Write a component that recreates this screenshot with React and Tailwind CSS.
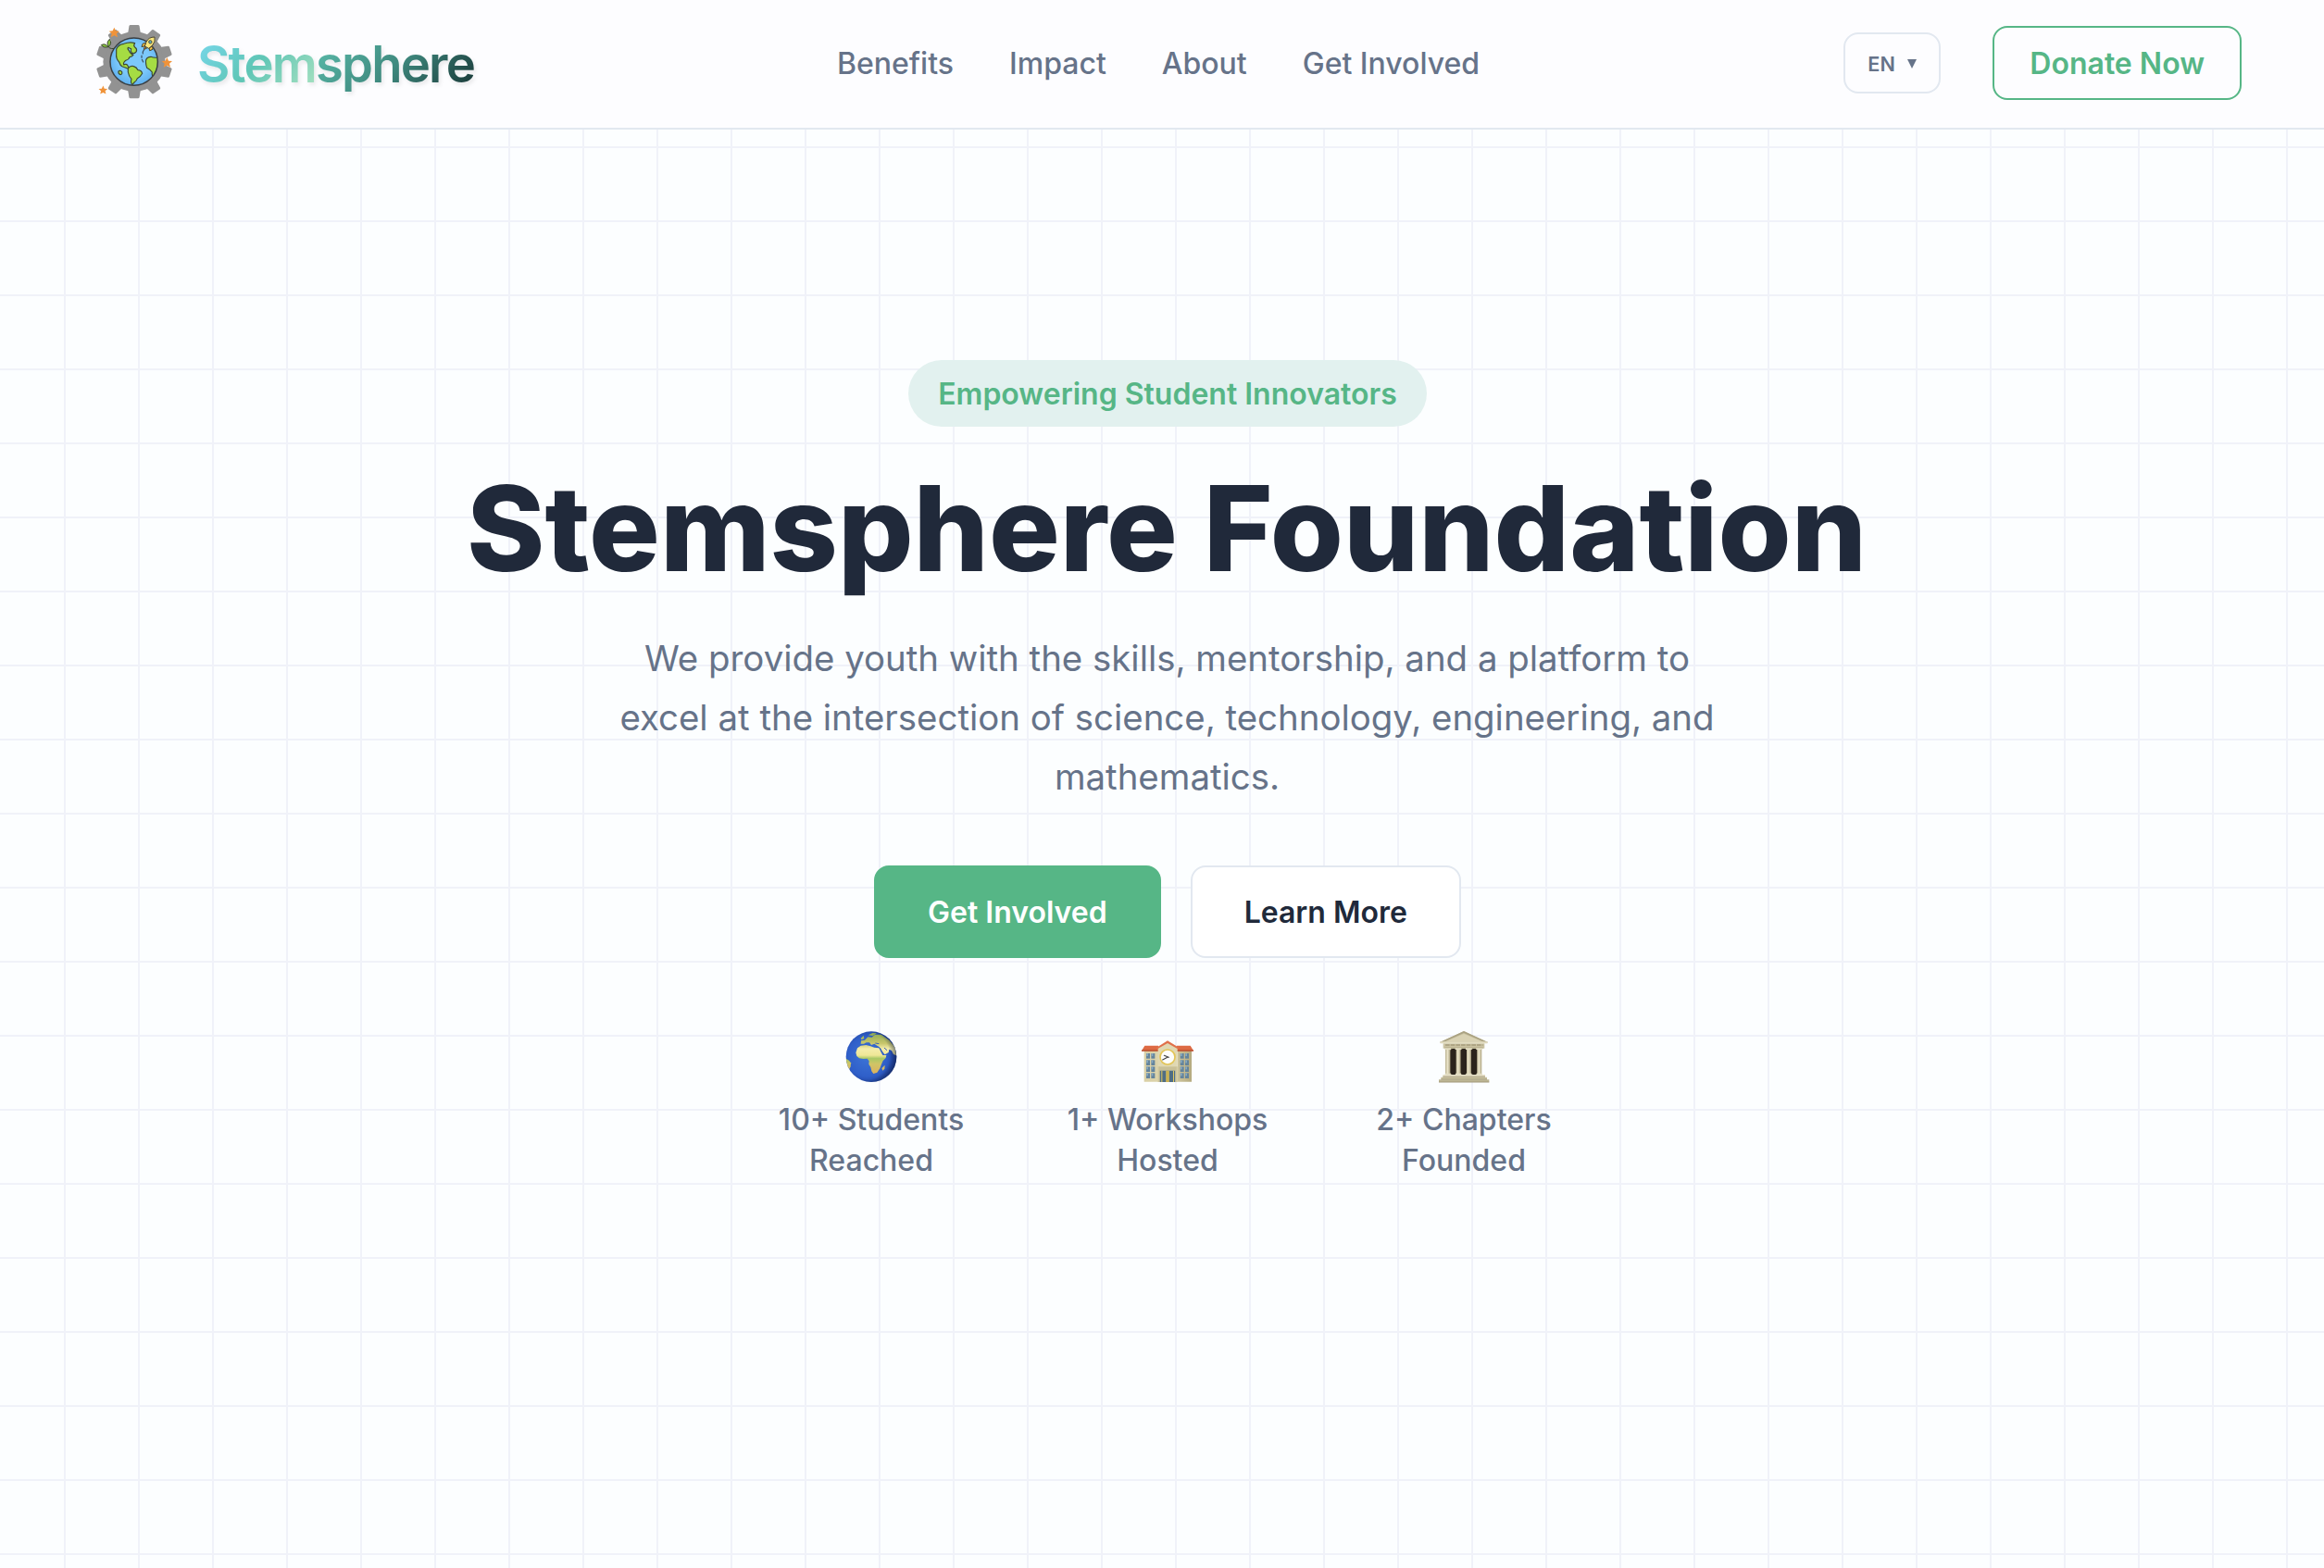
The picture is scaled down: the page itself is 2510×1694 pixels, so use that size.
const STAR = "M0 -17 L5 -6 L17 -5 L8 3 L11 15 L0 9 L-11 15 L-8 3 L-17 -5 L-5 -6 Z";
const TEETH = [0, 36, 72, 108, 144, 180, 216, 252, 288, 324];

function GearLogo() {
  return (
    <svg viewBox="0 6 300 288" className="h-24 w-[100px] shrink-0">
      <defs>
        <radialGradient id="sea" cx="0.5" cy="0.45" r="0.55">
          <stop offset="0.6" stopColor="#7cc8fb" />
          <stop offset="1" stopColor="#5fb0ee" />
        </radialGradient>
        <clipPath id="disc"><circle cx="149" cy="146" r="77" /></clipPath>
      </defs>
      <g fill="#929292" transform="translate(150 146) scale(1.04 1) translate(-149 -146)">
        <circle cx="149" cy="146" r="97" />
        {TEETH.map((a) => (
          <path key={a} transform={`rotate(${a} 149 146)`} d="M129 56 L133 30 Q134 27 137 27 L161 27 Q164 27 165 30 L169 56 Z" />
        ))}
      </g>
      <circle cx="149" cy="146" r="77" fill="url(#sea)" />
      <g clipPath="url(#disc)" fill="#a5dc43" stroke="#3d4a33" strokeWidth="3.5" strokeLinejoin="round">
        <path d="M92 105 Q98 90 116 88 Q136 80 152 86 Q146 94 152 99 Q160 104 157 113 Q150 122 142 117 Q137 112 140 104 L130 100 Q127 104 133 110 Q139 122 147 124 Q142 130 135 131 Q132 140 124 141 Q113 148 116 156 Q124 152 128 157 Q129 163 136 166 Q134 170 128 168 Q118 163 112 162 Q104 158 101 147 Q90 136 92 120 Z" />
        <path d="M130 168 Q136 158 148 161 Q158 164 162 173 Q174 174 176 184 Q170 196 160 200 Q158 208 150 213 L144 220 Q137 214 141 202 Q132 192 130 180 Z" />
        <path d="M188 140 Q192 130 204 130 Q214 134 228 132 L232 160 Q224 186 213 198 Q206 192 208 180 Q202 172 191 166 Q186 152 188 140 Z" />
        <path d="M99 177 Q104 172 110 179 Q112 187 105 188 Q97 185 99 177 Z" />
      </g>
      <circle cx="149" cy="146" r="77" fill="none" stroke="#3a3f43" strokeWidth="4.5" />
      <path d="M182 107 Q176 114 178 120 M174 126 L174 133 M175 139 L179 147" fill="none" stroke="#3b4d5c" strokeWidth="3.5" strokeLinecap="round" />
      <g stroke="#4a4432" strokeWidth="3" strokeLinejoin="round">
        <path d="M184 96 L181 106 L190 103 Z M199 101 L202 111 L207 103 Z" fill="#f3a13c" />
        <path d="M189 84 L177 88 L174 98 L184 95 Z M209 95 L210 106 L200 110 L198 102 Z" fill="#f4c445" />
        <path d="M216 66 Q196 66 189 82 L184 96 L197 103 L208 94 Q220 82 216 66 Z" fill="#f8e57c" />
        <circle cx="202" cy="82" r="5" fill="#63b9c4" />
      </g>
      <g fill="#8cc63f" stroke="#38452c" strokeWidth="3">
        <path d="M84 104 Q68 104 66 96" fill="none" />
        <path d="M66 98 Q50 102 43 92 Q56 85 66 98 Z" />
        <path d="M67 97 Q58 84 70 73 Q79 86 67 97 Z" />
      </g>
      <g fill="#f0933a">
        <path d={STAR} transform="translate(85 52)" />
        <path d={STAR} transform="translate(256 149)" />
        <path d={STAR} transform="translate(49 238) scale(0.85)" />
      </g>
    </svg>
  );
}

function Globe() {
  return (
    <svg viewBox="54 43 168 168" className="size-14">
      <defs>
        <radialGradient id="ocean" cx="0.42" cy="0.5" r="0.6">
          <stop offset="0" stopColor="#3d74d6" />
          <stop offset="0.65" stopColor="#2f5fc9" />
          <stop offset="1" stopColor="#1c3c94" />
        </radialGradient>
        <linearGradient id="land" gradientUnits="userSpaceOnUse" x1="0" y1="50" x2="0" y2="182">
          <stop offset="0" stopColor="#8fab52" />
          <stop offset="0.25" stopColor="#c8c66c" />
          <stop offset="0.38" stopColor="#f4edac" />
          <stop offset="0.54" stopColor="#efe796" />
          <stop offset="0.62" stopColor="#a9c865" />
          <stop offset="0.75" stopColor="#d0c466" />
          <stop offset="1" stopColor="#dcb15e" />
        </linearGradient>
        <radialGradient id="shade" cx="0.4" cy="0.48" r="0.62">
          <stop offset="0.75" stopColor="#0b1a40" stopOpacity="0" />
          <stop offset="1" stopColor="#0b1a40" stopOpacity="0.6" />
        </radialGradient>
        <clipPath id="ball"><circle cx="138" cy="126" r="82" /></clipPath>
      </defs>
      <circle cx="138" cy="126" r="82" fill="url(#ocean)" />
      <g clipPath="url(#ball)" fill="url(#land)">
        <path d="M88 113 L93 98 L104 90 L121 88 L136 92 L148 96 L163 98 L170 112 L175 121 L187 121 L185 130 L176 139 L171 150 L166 164 L157 177 L145 181 L139 173 L136 160 L130 150 L131 140 L125 132 L112 133 L99 131 L91 124 Z" />
        <path d="M104 84 L105 74 L117 72 L127 62 L140 63 L150 54 L170 54 L196 72 L216 96 L219 122 L210 118 L204 106 L196 102 L194 112 L182 119 L173 108 L164 94 L157 90 L148 84 L138 88 L132 80 L122 80 L114 84 Z" />
        <path d="M172 163 L182 153 L181 165 L175 171 Z" />
        <path d="M56 132 L66 138 L72 146 L71 158 L66 168 L52 160 Z" />
        <path d="M104 66 L113 57 L115 67 L107 71 Z M128 56 L142 49 L156 50 L143 58 Z" />
      </g>
      <path d="M166 97 L175 114 M180 97 L189 105 M151 82 L163 84" fill="none" stroke="#3b62b0" strokeWidth="3" />
      <circle cx="138" cy="126" r="82" fill="url(#shade)" />
    </svg>
  );
}

function School() {
  const rows = [115, 137, 158, 179];
  const cols = [69, 85, 179, 195];
  return (
    <svg viewBox="54 43 168 168" className="size-14">
      <defs>
        <linearGradient id="wing" x1="0" y1="0" x2="1" y2="0">
          <stop offset="0" stopColor="#d9d0a6" />
          <stop offset="0.5" stopColor="#ddd5ae" />
          <stop offset="1" stopColor="#b5ab80" />
        </linearGradient>
      </defs>
      <path d="M62 104 H108 V207 H62 Z M170 104 H216 V207 H170 Z" fill="url(#wing)" />
      <path d="M64 90 H108 V107 H54 Z M168 90 H212 L222 107 H168 Z" fill="#dd6a43" />
      <path d="M54 104 H108 V108 H54 Z M168 104 H222 V108 H168 Z" fill="#b9502f" />
      <path d="M107 96 L138 79 L170 96 V208 H107 Z" fill="#e0d8b2" />
      <path d="M100 98 L138 74 L177 98 L172 101 L138 82 L105 101 Z" fill="#e0704a" />
      {cols.map((x) => rows.map((y) => (
        <g key={`${x}-${y}`}>
          <rect x={x} y={y} width="12" height="17" fill="#64849c" />
          <rect x={x + 1} y={y} width="5" height="9" fill="#86a9c0" />
        </g>
      )))}
      <path d="M107 158 H113 V208 H107 Z M165 158 H170 V208 H165 Z" fill="#cfc69b" />
      <path d="M111 158 H166 V171 H111 Z" fill="#c9c097" />
      <rect x="113" y="171" width="50" height="37" fill="#4f6d84" />
      <path d="M118 171 h3 v37 h-3 Z M133 171 h10 v37 h-10 Z M156 171 h3 v37 h-3 Z" fill="#e5c95c" />
      <path d="M137 171 h2 v37 h-2 Z" fill="#9a8433" />
      <circle cx="138" cy="127" r="24" fill="#fdfdfb" stroke="#e3c557" strokeWidth="5" />
      <path d="M139 127 L122 136 M142 128 L127 122" stroke="#444" strokeWidth="3.5" strokeLinecap="round" />
    </svg>
  );
}

function Temple() {
  return (
    <svg viewBox="54 43 168 168" className="size-14">
      <defs>
        <linearGradient id="stone" x1="0" y1="0" x2="1" y2="0">
          <stop offset="0" stopColor="#c2ba9a" />
          <stop offset="0.45" stopColor="#eae4c9" />
          <stop offset="1" stopColor="#b3aa89" />
        </linearGradient>
      </defs>
      <rect x="78" y="98" width="118" height="86" fill="#bdb594" />
      {[94, 127, 161].map((x) => (
        <rect key={x} x={x} y="100" width="21" height="84" rx="8" fill="#2b231c" />
      ))}
      <path d="M138 43 L216 79 H60 Z" fill="#c9c2a1" />
      <path d="M138 52 L196 76 H80 Z" fill="#d9d2b3" />
      <path d="M138 43 L216 79 L212 82 L138 49 L64 82 L60 79 Z" fill="#aaa282" />
      <rect x="62" y="77" width="152" height="6" fill="#e2dcc0" />
      <rect x="71" y="83" width="134" height="16" fill="#cbc3a2" />
      <path d="M78 88 H200" stroke="#a59c7b" strokeWidth="4" strokeDasharray="14 3" />
      <rect x="76" y="95" width="124" height="4" fill="#b5ad8b" />
      {[79, 113, 147, 181].map((x) => (
        <g key={x}>
          <rect x={x} y="101" width="14" height="82" fill="url(#stone)" />
          <rect x={x - 3} y="98" width="20" height="5" fill="#e4dec3" />
          <rect x={x - 2} y="180" width="18" height="5" fill="#e4dec3" />
        </g>
      ))}
      <path d="M70 185 H207 V192 H70 Z" fill="#dcd5b7" />
      <path d="M64 192 H213 V200 H64 Z" fill="#c9c19f" />
      <path d="M57 200 H220 V209 H57 Z" fill="#bdb592" />
      <path d="M70 191 H207 M64 199 H213 M57 208 H220" stroke="#958d6e" strokeWidth="2" />
    </svg>
  );
}

const NAV = ["Benefits", "Impact", "About", "Get Involved"];
const STATS = [
  { Icon: Globe, label: "10+ Students Reached" },
  { Icon: School, label: "1+ Workshops Hosted" },
  { Icon: Temple, label: "2+ Chapters Founded" },
];

export default function App() {
  return (
    <div className="flex h-[1694px] w-full flex-col overflow-hidden bg-[#fcfeff] bg-[linear-gradient(to_right,#f0f2f9_2px,transparent_2px),linear-gradient(to_bottom,#f0f2f9_2px,transparent_2px)] bg-size-[80px_80px] bg-position-[69px_158px] font-[Inter,sans-serif] text-[32px] text-[#667389]">
      <header className="flex h-[140px] shrink-0 items-center border-b-2 border-[#e2e8f0] bg-[#fdfdff] pr-[89px] pb-[2px] pl-[95px]">
        <div className="flex w-[809px] items-center gap-[18px]">
          <GearLogo />
          <div className="flex pt-[2px] text-[54.4px] leading-[60px] font-semibold tracking-[-1.8px] drop-shadow-[2px_3px_2px_rgba(0,0,0,0.08)]">
            <span className="bg-linear-135 from-[#79d8ee] via-[#5fc6b6] to-[#a8e2c0] bg-clip-text text-transparent">Stem</span>
            <span className="bg-linear-135 from-[#5dbfae] via-[#3f8a7f] to-[#163333] bg-clip-text pr-1 text-transparent">sphere</span>
          </div>
        </div>
        <nav className="flex gap-[60px] pt-[2px] font-medium">
          {NAV.map((n) => <a key={n}>{n}</a>)}
        </nav>
        <div className="ml-auto flex items-center gap-14">
          <button className="flex h-[66px] w-[105px] items-center gap-[13px] rounded-2xl border-2 border-[#e2e8f0] pt-[2px] pl-6 text-[21.6px] font-semibold">
            EN
            <svg viewBox="0 0 10 10" className="size-[10px]"><path d="M0 0H10L5 10Z" fill="#667389" /></svg>
          </button>
          <button className="h-20 rounded-2xl border-2 border-[#56b686] px-[38px] pt-[2px] font-semibold text-[#56b686]">Donate Now</button>
        </div>
      </header>
      <main className="flex flex-col items-center pt-[249px] pl-3 text-center">
        <div className="flex h-[72px] items-center rounded-full bg-[#e2f1ef] px-8 pt-[2px] font-semibold text-[#56b686]">Empowering Student Innovators</div>
        <h1 className="mt-[39px] mr-[2px] text-[128px] leading-[141px] font-extrabold text-[#20293a]">Stemsphere Foundation</h1>
        <p className="mt-[38px] mr-px w-[1200px] text-[38.4px] leading-[64px]">We provide youth with the skills, mentorship, and a platform to excel at the intersection of science, technology, engineering, and mathematics.</p>
        <div className="mt-16 flex gap-8 font-semibold">
          <button className="h-[100px] rounded-2xl border-2 border-[#56b686] bg-[#56b686] px-14 pt-[2px] text-white">Get Involved</button>
          <button className="h-[100px] rounded-2xl border-2 border-[#e2e8f0] bg-white px-14 pt-[2px] text-[#20293a]">Learn More</button>
        </div>
        <div className="mt-[79px] flex gap-20">
          {STATS.map(({ Icon, label }) => (
            <div key={label} className="flex w-60 flex-col items-center gap-[18px] leading-[44px] font-medium">
              <Icon />
              {label}
            </div>
          ))}
        </div>
      </main>
    </div>
  );
}
